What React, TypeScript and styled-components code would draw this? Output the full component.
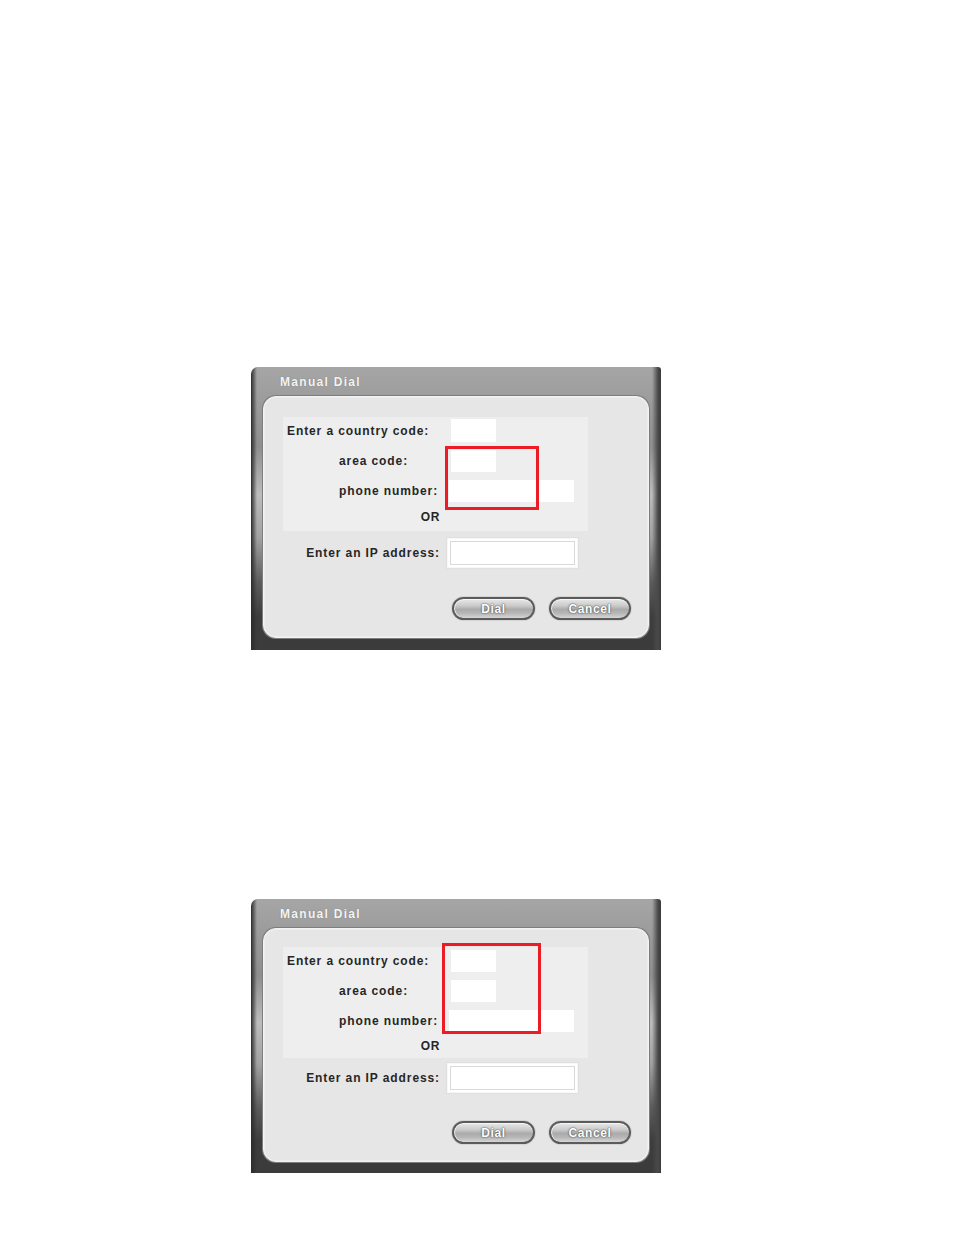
import React from 'react'
import styled, { createGlobalStyle } from 'styled-components'

const GlobalStyle = createGlobalStyle`
  html, body {
    margin: 0;
    padding: 0;
    background: #ffffff;
  }
  body {
    font-family: 'Liberation Sans', Arial, sans-serif;
  }
`

const Page = styled.div`
  display: flex;
  flex-direction: column;
  gap: 249px;
  padding: 367px 0 60px 251px;
`

const Window = styled.div<{ $compact?: boolean }>`
  position: relative;
  width: 410px;
  display: flex;
  flex-direction: column;
  padding-bottom: ${(p) => (p.$compact ? 11 : 12)}px;
  border-top-left-radius: 7px;
  border-top-right-radius: 3px;
  background:
    linear-gradient(to right, #2c2c2c 0px, rgba(40, 40, 40, 0) 6px, rgba(40, 40, 40, 0) calc(100% - 9px), #4a4a4a calc(100% - 3px), #3a3a3a 100%),
    linear-gradient(to bottom, #a6a6a6 0%, #9a9a9a 14%, #8e8e8e 28%, #bcbcbc 45%, #a2a2a2 60%, #5c5c5c 76%, #3d3d3d 88%, #3b3b3b 100%);
`

const TitleBar = styled.div`
  height: 29px;
  display: flex;
  align-items: center;
  padding-left: 29px;
  color: #f4f4f4;
  font-size: 12px;
  font-weight: 700;
  letter-spacing: 1.3px;
  text-shadow: 0 0 1px rgba(90, 90, 90, 0.6);
`

const Panel = styled.div<{ $compact?: boolean }>`
  margin: 0 12px;
  display: flex;
  flex-direction: column;
  padding: ${(p) => (p.$compact ? 18 : 20)}px 0 17px 19px;
  border-radius: 13px;
  background: #e6e6e6;
  border: 1px solid #f3f3f3;
  box-shadow: 0 0 0 1px #7d7d7d, inset 0 0 0 1px #ededed;
`

const Group = styled.div<{ $compact?: boolean }>`
  width: 305px;
  display: flex;
  flex-direction: column;
  gap: 8px;
  padding: ${(p) => (p.$compact ? '3px 0 5px' : '2px 0 7px')};
  background: #eeeeee;
`

const Row = styled.div`
  display: grid;
  grid-template-columns: 167px 125px;
  align-items: center;
`

const Label = styled.span<{ $indent: number }>`
  padding-left: ${(p) => p.$indent}px;
  color: #262626;
  font-size: 12px;
  font-weight: 700;
  letter-spacing: 0.9px;
  white-space: nowrap;
`

const Field = styled.input<{ $width: number; $height: number; $shift?: number }>`
  box-sizing: border-box;
  width: ${(p) => p.$width}px;
  height: ${(p) => p.$height}px;
  margin-left: ${(p) => p.$shift ?? 0}px;
  border: none;
  outline: none;
  background: #ffffff;
  padding: 0 4px;
`

const OrText = styled.div<{ $compact?: boolean }>`
  width: 157px;
  margin-top: ${(p) => (p.$compact ? -1 : 0)}px;
  text-align: right;
  color: #262626;
  font-size: 12px;
  font-weight: 700;
  letter-spacing: 0.6px;
  line-height: 14px;
`

const AddressRow = styled.div<{ $compact?: boolean }>`
  display: grid;
  grid-template-columns: 157px 131px;
  column-gap: 7px;
  align-items: center;
  margin-top: ${(p) => (p.$compact ? 5 : 7)}px;
`

const AddressLabel = styled.span`
  text-align: right;
  color: #262626;
  font-size: 12px;
  font-weight: 700;
  letter-spacing: 0.9px;
  white-space: nowrap;
`

const AddressField = styled.input`
  box-sizing: border-box;
  width: 131px;
  height: 30px;
  border: 1px solid #f7f7f7;
  outline: none;
  background: #ffffff;
  box-shadow: inset 0 0 0 2px #ffffff, inset 0 0 0 3px #d9d9d9, 0 0 1px 1px #e0e0e0;
  padding: 0 6px;
`

const ButtonRow = styled.div<{ $compact?: boolean }>`
  display: flex;
  justify-content: flex-end;
  gap: 14px;
  padding-right: 17px;
  margin-top: ${(p) => (p.$compact ? 28 : 29)}px;
`

const PillButton = styled.button<{ $width: number }>`
  box-sizing: border-box;
  width: ${(p) => p.$width}px;
  height: 23px;
  padding: 0;
  border-radius: 12px;
  border: 2px solid #5b5b5b;
  background: linear-gradient(to bottom, #e8e8e8 0%, #cbcbcb 35%, #ababab 55%, #b6b6b6 75%, #d6d6d6 100%);
  box-shadow: 0 0 0 1px #d4d4d4, inset 0 1px 0 #f6f6f6, inset 1px 0 0 #f0f0f0;
  color: #ffffff;
  font-family: 'Liberation Sans', Arial, sans-serif;
  font-size: 12px;
  font-weight: 700;
  letter-spacing: 0.6px;
  text-shadow: 0 0 2px #4a4a4a, 0 0 1px #555555;
  cursor: pointer;
`

const Highlight = styled.div<{ $left: number; $top: number; $width: number; $height: number }>`
  position: absolute;
  left: ${(p) => p.$left}px;
  top: ${(p) => p.$top}px;
  width: ${(p) => p.$width}px;
  height: ${(p) => p.$height}px;
  box-sizing: border-box;
  border: 3px solid #ec1c24;
  pointer-events: none;
`

type Box = { left: number; top: number; width: number; height: number }

const ManualDial = ({ compact, mark }: { compact?: boolean; mark: Box }) => {
  const fieldHeights = compact ? [22, 22, 22] : [23, 22, 22]

  return (
    <Window $compact={compact}>
      <TitleBar>Manual Dial</TitleBar>
      <Panel $compact={compact}>
        <Group $compact={compact}>
          <Row>
            <Label $indent={4}>Enter a country code:</Label>
            <Field $width={45} $height={fieldHeights[0]} $shift={1} />
          </Row>
          <Row>
            <Label $indent={56}>area code:</Label>
            <Field $width={45} $height={fieldHeights[1]} $shift={1} />
          </Row>
          <Row>
            <Label $indent={56}>phone number:</Label>
            <Field $width={125} $height={fieldHeights[2]} $shift={-1} />
          </Row>
          <OrText $compact={compact}>OR</OrText>
        </Group>
        <AddressRow $compact={compact}>
          <AddressLabel>Enter an IP address:</AddressLabel>
          <AddressField />
        </AddressRow>
        <ButtonRow $compact={compact}>
          <PillButton $width={83}>Dial</PillButton>
          <PillButton $width={82}>Cancel</PillButton>
        </ButtonRow>
      </Panel>
      <Highlight $left={mark.left} $top={mark.top} $width={mark.width} $height={mark.height} />
    </Window>
  )
}

const App = () => (
  <>
    <GlobalStyle />
    <Page>
      <ManualDial mark={{ left: 194, top: 79, width: 94, height: 64 }} />
      <ManualDial compact mark={{ left: 191, top: 44, width: 99, height: 91 }} />
    </Page>
  </>
)

export default App
